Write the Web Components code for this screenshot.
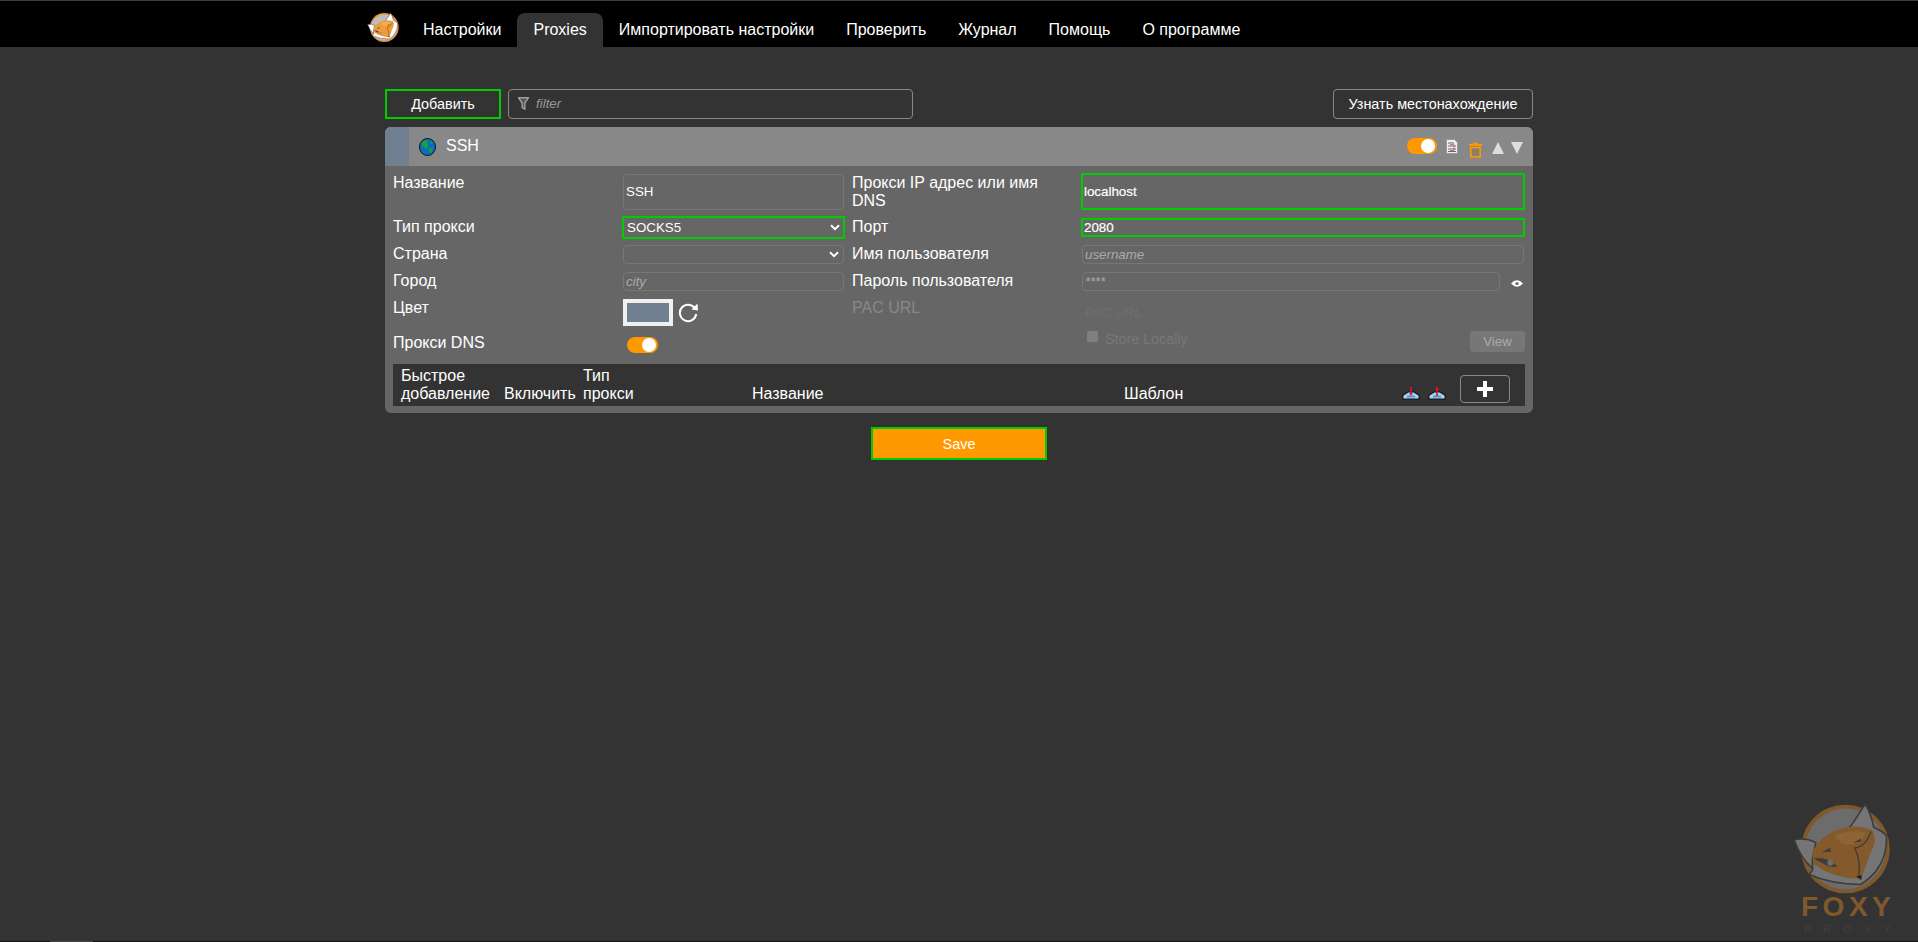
<!DOCTYPE html>
<html lang="ru"><head><meta charset="utf-8"><title>FoxyProxy</title>
<style>
html,body{margin:0;height:100%;background:#333;color:#fff;font:16px "Liberation Sans",Arial,sans-serif;overflow:hidden}
body{display:flex;flex-direction:column;height:942px;position:relative}
</style></head>
<body>
<fp-nav></fp-nav>
<fp-page></fp-page>
<fp-bottom></fp-bottom>
<fp-watermark></fp-watermark>
<script>
function def(name, html){
  customElements.define(name, class extends HTMLElement{
    constructor(){super();const r=this.attachShadow({mode:'open'});r.innerHTML=html;}
  });
}
def('fp-fox',`<style>:host{display:block;width:32px;height:31px}svg{display:block;width:100%;height:100%}</style>
<svg viewBox="60 38 300 280" aria-hidden="true">
<circle cx="222" cy="178" r="135" fill="var(--ring,#f09030)"/>
<circle cx="222" cy="178" r="123" fill="var(--disc,#bdbdbd)"/>
<path d="M66 150Q100 142 132 158L122 205 122 238Q85 205 66 150Z" fill="var(--ear,#fff)" stroke="var(--line,#444)" stroke-width="5" stroke-linejoin="round"/>
<path d="M240 106 282 42Q300 70 308 112 335 124 347 138 350 200 315 245 295 270 268 286 180 286 110 255 125 245 122 232L122 212Z" fill="var(--ear,#fff)" stroke="var(--line,#444)" stroke-width="5" stroke-linejoin="round"/>
<path d="M124 180Q160 122 232 110 270 106 304 122 322 150 296 195L272 262 258 268Q190 268 128 226 118 205 124 180Z" fill="var(--face,#f29a38)"/>
<path d="M190 135Q240 118 285 128 270 170 232 165 200 165 190 135Z" fill="var(--face2,#f7ab52)"/>
<path d="M300 125Q285 170 250 175 270 215 262 265" fill="none" stroke="var(--line,#444)" stroke-width="4"/>
<path d="M150 188 175 174 178 186ZM245 160 268 146 270 155Z" fill="var(--line,#444)"/>
<path d="M125 207Q165 200 198 232 172 236 150 220Z" fill="var(--line,#444)"/>
<circle cx="176" cy="220" r="9" fill="var(--disc,#bdbdbd)"/>
<path d="M254 262 272 258 270 272Z" fill="#222"/>
</svg>`);
def('fp-nav',`<style>
:host{display:block;height:46px;background:#000;border-top:1px solid #3c3c44;flex:none}
.in{width:1184px;height:46px;margin:0 auto;display:flex;align-items:flex-end}
fp-fox{align-self:flex-start;margin:11px 8px 0 0}
a{display:block;height:34px;line-height:34px;padding:0 16px;color:#fff;font-size:16px;white-space:nowrap;box-sizing:border-box}
a.on{background:#333;border-radius:8px 8px 0 0}
</style><div class="in"><fp-fox></fp-fox><a>Настройки</a><a class="on">Proxies</a><a>Импортировать настройки</a><a>Проверить</a><a>Журнал</a><a>Помощь</a><a>О программе</a></div>`);
def('fp-btn',`<style>
:host{display:flex;align-items:center;justify-content:center;box-sizing:border-box;height:30px;border:1px solid #888;border-radius:4px;color:#fff;font-size:14.4px;white-space:nowrap;background:#333}
:host([green]){border:2px solid #0c0;border-radius:0;}
</style><slot></slot>`);
def('fp-toolbar',`<style>
:host{display:flex;height:30px;margin-top:42px}
.add{width:116px;margin-right:7px}
.f{width:405px;box-sizing:border-box;height:30px;border:1px solid #888;border-radius:4px;display:flex;align-items:center;padding:0 0 2px 9px;gap:7px;font:italic 13.33px "Liberation Sans",sans-serif;color:#999}
.loc{width:200px;margin-left:auto}
svg{display:block}
</style><fp-btn class="add" green>Добавить</fp-btn>
<div class="f"><svg width="11" height="13" viewBox="0 0 11 13"><path d="M.6.8h9.8L6.8 6v6.2L4.2 10.6V6Z" fill="#555" stroke="#a0a0a0" stroke-width="1.4"/></svg><span>filter</span></div>
<fp-btn class="loc">Узнать местонахождение</fp-btn>`);
def('fp-toggle',`<style>
:host{display:block;width:31px;height:16px;border-radius:8px;background:#f90;position:relative}
i{position:absolute;right:2px;top:1px;width:14px;height:14px;border-radius:50%;background:#fff}
</style><i></i>`);
def('fp-field',`<style>
:host{display:flex;align-items:center;box-sizing:border-box;border:1px solid #777;border-radius:4px;padding:0 2px;font:13.33px "Liberation Sans",sans-serif;color:#fff;white-space:nowrap;overflow:hidden}
:host([hot]){border:2px solid #0c0;border-radius:0;padding:0 1px;-webkit-text-stroke:.2px #fff}
:host([ph]){font-style:italic;color:#aaa}
:host([select]){justify-content:space-between;padding-right:4px}
:host([hot][select]){padding:0 3px 1px 3px;-webkit-text-stroke:0}
:host([up]){padding-bottom:2px}
svg{display:none}
:host([select]) svg{display:block;flex:none}
</style><span><slot></slot></span><svg width="10" height="7" viewBox="0 0 10 7"><path d="M1 1.2 5 5.2 9 1.2" fill="none" stroke="#fff" stroke-width="2"/></svg>`);
def('fp-item-header',`<style>
:host{display:flex;align-items:center;height:39px;background:#888;border-radius:6px 6px 0 0;overflow:hidden;font-size:16px}
.sw{width:24px;align-self:stretch;background:#708090;margin-right:10px}
.t{margin-left:10px;position:relative;top:-1px}
.r{margin-left:auto;display:flex;align-items:flex-start;align-self:stretch;padding-right:10px;position:relative}
fp-toggle{margin-top:11px;width:30px}
svg{display:block}
</style><div class="sw"></div>
<svg width="17" height="18" viewBox="0 0 17 18"><ellipse cx="8.5" cy="9" rx="8" ry="8.5" fill="#0b6fc0" stroke="#111"/><path d="M3 4 7 2.5 9 4 8 6 9.5 8 7 11 5.5 9 3 7.5ZM10 10 13.5 10.5 12 15 10.5 15ZM11 3 14 5 12 6Z" fill="#1ea52e"/></svg>
<span class="t">SSH</span>
<div class="r"><fp-toggle></fp-toggle>
<svg style="margin:12px 0 0 9px" width="12" height="15" viewBox="0 0 12 15"><path d="M.5.5h8l3 3v11H.5Z" fill="#eee" stroke="#999"/><path d="M2 4h6M2 7h8M2 10h8M2 12.5h8" stroke="#667" stroke-width="1"/><path d="M4 5.5h4v6H4" fill="none" stroke="#a66" stroke-width=".8"/></svg>
<svg style="margin:15px 0 0 11px" width="13" height="16" viewBox="0 0 13 16"><path d="M4 .7h5V2H4ZM0 2h13v1.7H0Z" fill="#f90"/><rect x="1.8" y="5.5" width="9.4" height="9.3" fill="#8f7f68" stroke="#f90" stroke-width="1.6"/></svg>
<svg style="margin:15px 0 0 10px" width="12" height="12" viewBox="0 0 12 12"><path d="M6 0 12 12H0Z" fill="#ddd"/></svg>
<svg style="margin:15px 0 0 7px" width="12" height="12" viewBox="0 0 12 12"><path d="M0 0H12L6 12Z" fill="#ddd"/></svg>
</div>`);
def('fp-form',`<style>
:host{display:grid;grid-template-columns:229px 223px 236px 444px;grid-template-rows:43px 28px 27px 27px 33px 33px;padding:7px 8px 0;font-size:16px;line-height:18px}
.l{padding-top:1px;color:#fff}
.rl{padding-left:7px;padding-right:20px}
.dim{color:#888}
fp-field{margin:1px 1px 0}
.tall{height:36px}.sm{height:19px}
.hot2{margin:0;height:37px}
.sel{margin:0;height:23px}
.port{margin:2px 0 0;height:19px}
.long{margin-right:25px}
.pw{align-items:flex-start;font-size:13px;line-height:15px;padding-top:1px}
.pwrow{position:relative}
.pwrow svg{position:absolute;right:2px;top:8px}
.c{display:flex;align-items:flex-start;padding:1px 0 0 1px}
.sw{width:50px;height:27px;box-sizing:border-box;border:4px solid #f0f0f0;background:#708090;outline:0}
.c svg{margin:4px 0 0 4px}
.pac{font:italic 13.33px "Liberation Sans",sans-serif;color:#6f6f6f;padding:3px 4px 0;line-height:24px}
.st{display:flex;align-items:flex-start;padding-left:6px;color:#787878;font-size:14.3px}
.cb{width:11px;height:11px;background:#7f7f7f;border-radius:1px;margin:0 7px 0 0}
.st span{line-height:14px;padding-top:1px}
.view{margin:0 0 0 auto;width:55px;height:21px;background:#777;border-radius:3px;color:#aaa;font-size:13.33px;display:flex;align-items:center;justify-content:center}
.tg{padding:6px 0 0 5px}
</style>
<div class="l">Название</div><fp-field class="tall" up>SSH</fp-field>
<div class="l rl">Прокси IP адрес или имя DNS</div><fp-field class="hot2" hot>localhost</fp-field>
<div class="l" style="padding-top:2px">Тип прокси</div><fp-field class="sel" hot select>SOCKS5</fp-field>
<div class="l rl" style="padding-top:2px">Порт</div><fp-field class="port" hot>2080</fp-field>
<div class="l">Страна</div><fp-field class="sm" select></fp-field>
<div class="l rl">Имя пользователя</div><fp-field class="sm" ph>username</fp-field>
<div class="l">Город</div><fp-field class="sm" ph>city</fp-field>
<div class="l rl">Пароль пользователя</div><div class="pwrow"><fp-field class="sm long pw" ph>****</fp-field><svg width="12" height="9" viewBox="0 0 12 9"><path d="M0 4.5Q6-2 12 4.5 6 11 0 4.5Z" fill="#fff"/><circle cx="6" cy="4.5" r="1.6" fill="#666"/></svg></div>
<div class="l">Цвет</div><div class="c"><div class="sw"></div><svg width="22" height="20" viewBox="0 0 22 20"><path d="M18 5.5A8.2 8.2 0 1 0 19.2 11" fill="none" stroke="#fff" stroke-width="2"/><path d="M14.5 6.5 21 7.5 20.5 .5Z" fill="#fff"/></svg></div>
<div class="l rl dim">PAC URL</div><div class="pac">PAC URL</div>
<div class="l" style="padding-top:3px">Прокси DNS</div><div class="tg"><fp-toggle></fp-toggle></div>
<div></div><div class="st"><div class="cb"></div><span>Store Locally</span><div class="view">View</div></div>`);
const tray=(d)=>`<svg width="18" height="14" viewBox="0 0 18 14"><path d="M.8 13.2V10Q1 9 3 8L6 6H12L15 8Q17 9 17.2 10V13.2Z" fill="#a8d4f2" stroke="#111" stroke-width="1.2"/><path d="M5 10.5H13" stroke="#4a9ad8" stroke-width="2"/><path d="${d}" fill="#e01030"/></svg>`;
def('fp-table-head',`<style>
:host{display:grid;grid-template-columns:8px 103px 79px 169px 372px 278px 26px 32px 1fr;align-items:end;height:42px;background:#333;font-size:16px;line-height:18px;margin:0 8px;padding-bottom:3px;box-sizing:border-box}
.i{padding-bottom:3px;line-height:0}
.p{width:50px;height:28px;box-sizing:border-box;border:1px solid #888;border-radius:4px;display:flex;align-items:center;justify-content:center}
</style><i></i><div>Быстрое<br>добавление</div><div>Включить</div><div>Тип<br>прокси</div><div>Название</div><div>Шаблон</div>
<div class="i">${tray('M8.2 1H9.8V7H10.8L9 10 7.2 7H8.2Z')}</div><div class="i">${tray('M8.2 10H9.8V4H11L9 0 7 4H8.2Z')}</div>
<div class="p"><svg width="16" height="16" viewBox="0 0 16 16"><path d="M6 0h4v6h6v4h-6v6H6v-6H0V6h6Z" fill="#fff"/></svg></div>`);
def('fp-proxy-item',`<style>:host{display:block;background:#666;border-radius:6px;margin-top:8px;padding-bottom:7px}</style>
<fp-item-header></fp-item-header><fp-form></fp-form><fp-table-head></fp-table-head>`);
def('fp-page',`<style>
:host{display:block;width:1148px;margin:0 auto;flex:1}
.s{display:flex;justify-content:center;margin-top:14px}
.b{width:176px;height:33px;box-sizing:border-box;border:2px solid #0c0;background:#f90;color:#fff;font-size:14.4px;display:flex;align-items:center;justify-content:center}
</style><fp-toolbar></fp-toolbar><fp-proxy-item></fp-proxy-item><div class="s"><div class="b">Save</div></div>`);
def('fp-bottom',`<style>:host{display:block;height:1px;background:#111;flex:none}
i{display:block;margin-left:50px;width:43px;height:1px;background:#444}</style><i></i>`);
def('fp-watermark',`<style>
:host{position:absolute;left:1792px;top:803px;width:120px;display:flex;flex-direction:column;--ring:#7f582c;--disc:#6c6c6c;--ear:#757575;--face:#84592b;--face2:#8f6434;--line:#3c3c3c}
fp-fox{width:99px;height:92px}
.a{font:bold 28px/24px "Liberation Sans",sans-serif;letter-spacing:4.5px;color:#7f582c;margin:0 0 0 9px;white-space:nowrap}
.b{font:11px/12px "Liberation Sans",sans-serif;letter-spacing:12px;color:#3f3f3f;margin:4px 0 0 12px;white-space:nowrap}
</style><fp-fox></fp-fox><div class="a">FOXY</div><div class="b">PROXY</div>`);
</script>
</body></html>
